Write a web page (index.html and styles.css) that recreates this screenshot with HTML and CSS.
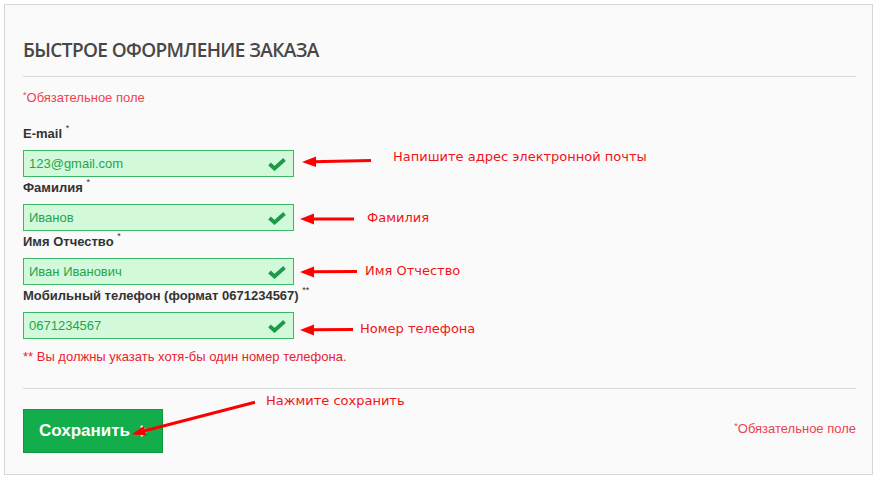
FILE: index.html
```html
<!DOCTYPE html>
<html lang="ru">
<head>
  <meta charset="UTF-8">
  <title>Быстрое оформление заказа</title>
  <link rel="stylesheet" href="styles.css">
</head>
<body>
  <div class="panel">
    <h2 class="title">БЫСТРОЕ ОФОРМЛЕНИЕ ЗАКАЗА</h2>
    <div class="divider"></div>
    <p class="req"><sup>*</sup>Обязательное поле</p>

    <form class="order-form">
      <div class="field">
        <label>E-mail <sup>*</sup></label>
        <div class="input-box">
          <input type="text" value="123@gmail.com">
          <svg class="check" viewBox="0 0 20 14"><polyline points="2.5,7 7.5,11.5 17.5,2.5"/></svg>
        </div>
      </div>

      <div class="field">
        <label>Фамилия <sup>*</sup></label>
        <div class="input-box">
          <input type="text" value="Иванов">
          <svg class="check" viewBox="0 0 20 14"><polyline points="2.5,7 7.5,11.5 17.5,2.5"/></svg>
        </div>
      </div>

      <div class="field">
        <label>Имя Отчество <sup>*</sup></label>
        <div class="input-box">
          <input type="text" value="Иван Иванович">
          <svg class="check" viewBox="0 0 20 14"><polyline points="2.5,7 7.5,11.5 17.5,2.5"/></svg>
        </div>
      </div>

      <div class="field">
        <label>Мобильный телефон (формат 0671234567) <sup>**</sup></label>
        <div class="input-box">
          <input type="text" value="0671234567">
          <svg class="check" viewBox="0 0 20 14"><polyline points="2.5,7 7.5,11.5 17.5,2.5"/></svg>
        </div>
      </div>

      <p class="warn">** Вы должны указать хотя-бы один номер телефона.</p>

      <div class="divider bottom"></div>

      <div class="footer">
        <button type="button" class="save-btn">
          Сохранить
          <svg class="chevron" viewBox="0 0 9 14"><polyline points="2,2 7,7 2,12"/></svg>
        </button>
        <p class="req"><sup>*</sup>Обязательное поле</p>
      </div>
    </form>
  </div>

  <!-- пометки поверх скриншота -->
  <svg class="arrows" viewBox="0 0 874 477">
    <line x1="313" y1="161.8" x2="371" y2="160.5"/>
    <polygon points="302,162 316,156.5 316,167"/>
    <line x1="311" y1="219" x2="354" y2="219"/>
    <polygon points="300,219 314,213.5 314,224.5"/>
    <line x1="311" y1="271.8" x2="357" y2="271.5"/>
    <polygon points="300,272 314,266.5 314,277.5"/>
    <line x1="311" y1="329.8" x2="353" y2="329.5"/>
    <polygon points="300,330 314,324.5 314,335.5"/>
    <line x1="142" y1="431.5" x2="255" y2="402.3"/>
    <polygon points="131.7,434.3 146.5,435.6 144,426"/>
  </svg>
  <span class="note note-email">Напишите адрес электронной почты</span>
  <span class="note note-last">Фамилия</span>
  <span class="note note-name">Имя Отчество</span>
  <span class="note note-phone">Номер телефона</span>
  <span class="note note-save">Нажмите сохранить</span>
</body>
</html>
```

FILE: styles.css
```css
body {
  margin: 0;
  background: #fff;
  font-family: "Liberation Sans", Arial, sans-serif;
  position: relative;
  width: 874px;
  height: 477px;
  overflow: hidden;
}
.panel {
  margin: 4px 0 0 4px;
  width: 869px;
  height: 471px;
  box-sizing: border-box;
  padding: 0 16px 0 18px;
  background: #fafafa;
  border: 1px solid #d6d6d6;
}
.title {
  margin: 33px 0 0 0;
  font-family: "Open Sans", sans-serif;
  font-weight: 600;
  font-size: 19px;
  letter-spacing: -0.6px;
  line-height: 24px;
  color: #474747;
}
.divider {
  height: 1px;
  background: #d9d9d9;
  margin-top: 14px;
}
.divider.bottom {
  margin-top: 23px;
}
.req {
  margin: 13px 0 0 0;
  font-size: 13px;
  line-height: 16px;
  color: #ec4352;
}
.req sup, label sup {
  font-size: 9px;
  vertical-align: top;
  line-height: 10px;
}
.order-form {
  margin-top: 19px;
}
.field {
  margin-bottom: 2px;
}
label {
  display: block;
  font-size: 13px;
  font-weight: bold;
  line-height: 17px;
  color: #333;
  margin-bottom: 8px;
}
label sup {
  font-weight: normal;
  position: relative;
  top: -2px;
}
.input-box {
  display: flex;
  align-items: center;
  width: 271px;
  height: 27px;
  box-sizing: border-box;
  background: #d2fada;
  border: 1px solid #3bb866;
}
.input-box input {
  flex: 1;
  min-width: 0;
  height: 100%;
  border: none;
  outline: none;
  background: transparent;
  padding: 0 0 0 5px;
  font-family: "Liberation Sans", Arial, sans-serif;
  font-size: 13px;
  color: #23a550;
}
.check {
  width: 20px;
  height: 14px;
  margin-right: 6px;
  fill: none;
  stroke: #1c9a48;
  stroke-width: 3.8;
}
.warn {
  margin: 10px 0 0 0;
  font-size: 13px;
  line-height: 16px;
  color: #e82430;
}
.footer {
  display: flex;
  justify-content: space-between;
  align-items: center;
  margin-top: 20px;
}
.footer .req {
  margin: 0;
  position: relative;
  top: -2px;
}
.save-btn {
  display: flex;
  align-items: center;
  gap: 9px;
  width: 140px;
  height: 44px;
  padding: 0 0 0 15px;
  background: #13ae4b;
  border: 1px solid #0e9840;
  color: #fff;
  font-family: "Liberation Sans", Arial, sans-serif;
  font-weight: bold;
  font-size: 17px;
  cursor: pointer;
}
.chevron {
  width: 9px;
  height: 14px;
  fill: none;
  stroke: #f2f2f2;
  stroke-width: 2.6;
}
.arrows {
  position: absolute;
  left: 0;
  top: 0;
  width: 874px;
  height: 477px;
  pointer-events: none;
}
.arrows line {
  stroke: #f00;
  stroke-width: 3;
}
.arrows polygon {
  fill: #f00;
}
.note {
  position: absolute;
  font-family: "DejaVu Sans", Verdana, sans-serif;
  font-size: 13px;
  line-height: 16px;
  color: #f01418;
  white-space: nowrap;
}
.note-email { left: 393px; top: 149px; }
.note-last { left: 367px; top: 210px; }
.note-name { left: 365px; top: 263px; }
.note-phone { left: 360px; top: 321px; }
.note-save { left: 266px; top: 393px; }
```
